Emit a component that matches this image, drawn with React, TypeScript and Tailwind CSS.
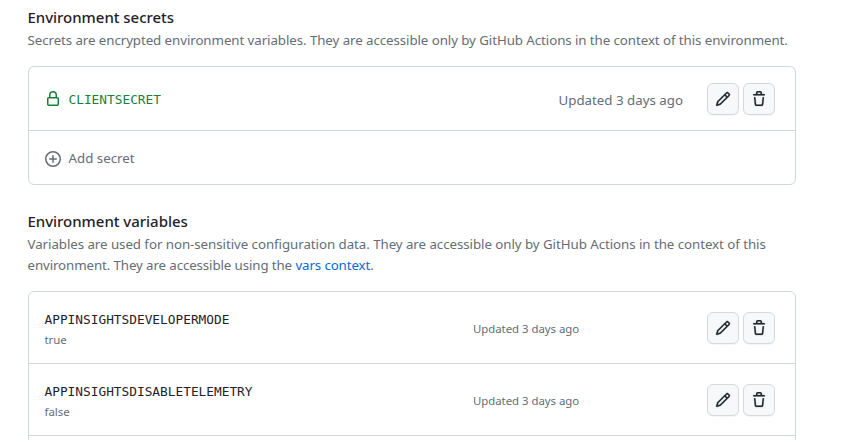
import type { ReactNode } from "react";

const paths = {
  pencil:
    "M11.013 1.427a1.75 1.75 0 0 1 2.474 0l1.086 1.086a1.75 1.75 0 0 1 0 2.474l-8.61 8.61c-.21.21-.47.364-.756.445l-3.251.93a.75.75 0 0 1-.927-.928l.929-3.25c.081-.286.235-.547.445-.758l8.61-8.61Zm.176 4.823L9.75 4.81l-6.286 6.287a.253.253 0 0 0-.064.108l-.558 1.953 1.953-.558a.253.253 0 0 0 .108-.064Zm1.238-3.763a.25.25 0 0 0-.354 0L10.811 3.75l1.439 1.44 1.263-1.263a.25.25 0 0 0 0-.354Z",
  trash:
    "M11 1.75V3h2.25a.75.75 0 0 1 0 1.5H2.75a.75.75 0 0 1 0-1.5H5V1.75C5 .784 5.784 0 6.75 0h2.5C10.216 0 11 .784 11 1.75ZM4.496 6.675l.66 6.6a.25.25 0 0 0 .249.225h5.19a.25.25 0 0 0 .249-.225l.66-6.6a.75.75 0 0 1 1.492.149l-.66 6.6A1.748 1.748 0 0 1 10.595 15h-5.19a1.75 1.75 0 0 1-1.741-1.575l-.66-6.6a.75.75 0 1 1 1.492-.15ZM6.5 1.75V3h3V1.75a.25.25 0 0 0-.25-.25h-2.5a.25.25 0 0 0-.25.25Z",
  lock:
    "M4 4a4 4 0 0 1 8 0v2h.25c.966 0 1.75.784 1.75 1.75v5.5A1.75 1.75 0 0 1 12.25 15h-8.5A1.75 1.75 0 0 1 2 13.25v-5.5C2 6.784 2.784 6 3.75 6H4Zm8.25 3.5h-8.5a.25.25 0 0 0-.25.25v5.5c0 .138.112.25.25.25h8.5a.25.25 0 0 0 .25-.25v-5.5a.25.25 0 0 0-.25-.25ZM10.5 6V4a2.5 2.5 0 1 0-5 0v2Z",
  plus:
    "M8 0a8 8 0 1 1 0 16A8 8 0 0 1 8 0ZM1.5 8a6.5 6.5 0 1 0 13 0 6.5 6.5 0 0 0-13 0Zm7.25-3.25v2.5h2.5a.75.75 0 0 1 0 1.5h-2.5v2.5a.75.75 0 0 1-1.5 0v-2.5h-2.5a.75.75 0 0 1 0-1.5h2.5v-2.5a.75.75 0 0 1 1.5 0Z",
};

function Icon({ name, bold = false }: { name: keyof typeof paths; bold?: boolean }) {
  return (
    <svg
      viewBox="0 0 16 16"
      className="size-4 shrink-0 fill-current stroke-current"
      strokeWidth={bold ? 0.18 : 0}
      aria-hidden="true"
    >
      <path d={paths[name]} />
    </svg>
  );
}

function IconButton({ name, label }: { name: keyof typeof paths; label: string }) {
  return (
    <button
      aria-label={label}
      className="flex size-8 items-center justify-center rounded-md border border-[#d5d8dc] bg-[#f6f8fa] text-[#24292f] shadow-[0_1px_0_rgba(31,35,40,0.04)]"
    >
      <Icon name={name} bold />
    </button>
  );
}

function Actions() {
  return (
    <div className="flex gap-1">
      <IconButton name="pencil" label="Edit" />
      <IconButton name="trash" label="Delete" />
    </div>
  );
}

function Heading({ children }: { children: ReactNode }) {
  return (
    <h2 className="-mt-px mb-px -ml-[0.5px] text-[15px] leading-6 font-medium tracking-[-0.03px] text-[#1f2328]">
      {children}
    </h2>
  );
}

const variables = [
  { name: "APPINSIGHTSDEVELOPERMODE", value: "true" },
  { name: "APPINSIGHTSDISABLETELEMETRY", value: "false" },
];

const mono = "font-['DejaVu_Sans_Mono',monospace] text-[12.8px]";

export default function App() {
  return (
    <main className="flex h-[440px] flex-col overflow-hidden bg-white pt-1.5 pl-7 font-['Noto_Sans',sans-serif] text-[13.3px] leading-[21px] whitespace-nowrap text-[#656d76]">
      <section className="w-[768px] shrink-0">
        <Heading>Environment secrets</Heading>
        <p className="-ml-[0.5px] tracking-[-0.07px]">
          Secrets are encrypted environment variables. They are accessible only by GitHub Actions in the context of this environment.
        </p>
        <div className="mt-[15px] rounded-md border border-[#d0d7de]">
          <div className="flex h-16 items-center border-b border-[#d0d7de] pr-5 pl-4">
            <div className="flex flex-1 items-center gap-[7.5px] text-[#1a7f37]">
              <Icon name="lock" />
              <span className={mono + " pt-0.5"}>CLIENTSECRET</span>
            </div>
            <span className="mr-6 pt-[3px]">Updated 3 days ago</span>
            <Actions />
          </div>
          <div className="flex h-[53px] items-center gap-[7.5px] pt-0.5 pl-4">
            <Icon name="plus" />
            <span>Add secret</span>
          </div>
        </div>
      </section>

      <section className="mt-[25px] w-[768px] shrink-0">
        <Heading>Environment variables</Heading>
        <p className="-ml-[0.5px] tracking-[-0.052px]">
          Variables are used for non-sensitive configuration data. They are accessible only by GitHub Actions in the context of this
          <br />
          <span className="tracking-[-0.105px]">
            environment. They are accessible using the <a className="text-[#0969da]">vars context</a>.
          </span>
        </p>
        <div className="mt-[15px] h-[180px] rounded-t-md border border-[#d0d7de]">
          {variables.map((v) => (
            <div key={v.name} className="flex h-[72px] items-center border-b border-[#d0d7de] pr-5 pl-4 text-[11.4px]">
              <div className="w-[428px] pt-[3px]">
                <div className={mono + " -ml-[0.5px] text-[#1f2328]"}>{v.name}</div>
                <div className="-ml-[0.5px] leading-[19px]">{v.value}</div>
              </div>
              <span className="flex-1 pt-[2px] tracking-[-0.03px]">Updated 3 days ago</span>
              <Actions />
            </div>
          ))}
        </div>
      </section>
    </main>
  );
}
